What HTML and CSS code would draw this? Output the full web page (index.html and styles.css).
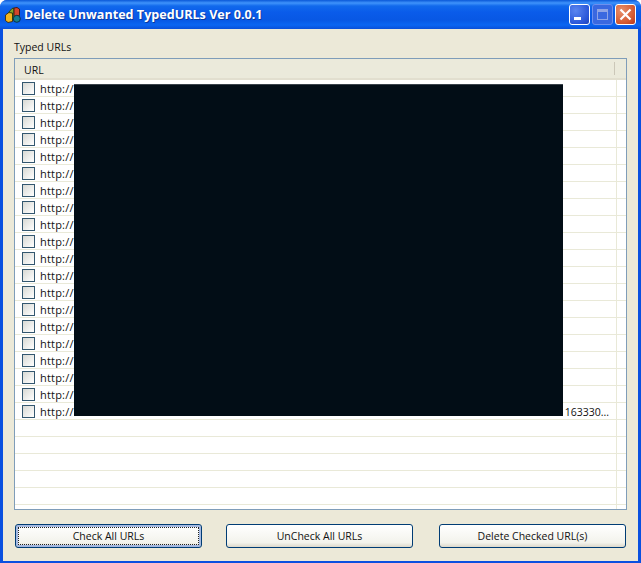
FILE: index.html
```
<!DOCTYPE html>
<html lang="en">
<head>
<meta charset="utf-8">
<title>Delete Unwanted TypedURLs Ver 0.0.1</title>
<link rel="stylesheet" href="styles.css">
</head>
<body>
<div class="window">
  <header class="titlebar">
    <svg class="app-icon" width="16" height="16" viewBox="0 0 16 16" aria-hidden="true">
      <path d="M0.500 8 4.500 5 7.500 6 7.500 14.500 3 15.500 0.500 13.500Z" fill="#f2b41e" stroke="#3a2a10" stroke-width=".9"/>
      <path d="M3.500 5.500 7 1.500 9 1 9 12 7.500 12.500 7.500 6Z" fill="#7fa52c" stroke="#243c10" stroke-width=".9"/>
      <path d="M9 1 12 0.500 14.500 2 14.500 8.500 9 9.500Z" fill="#d4462a" stroke="#3c1410" stroke-width=".9"/>
      <circle cx="11.800" cy="11.800" r="3.500" fill="#157f8f" stroke="#0a2c3c" stroke-width=".9"/>
    </svg>
    <span class="title">Delete Unwanted TypedURLs Ver 0.0.1</span>
    <div class="controls">
      <span class="ctl ctl-min"><svg width="19" height="19" viewBox="0 0 19 19" aria-hidden="true"><rect x="4" y="12" width="7" height="3" fill="#fff"/></svg></span>
      <span class="ctl ctl-max"><svg width="19" height="19" viewBox="0 0 19 19" aria-hidden="true"><path d="M4 4h11v11H4Z M5 7v7h9V7Z" fill="#8fa4e6" fill-rule="evenodd"/></svg></span>
      <span class="ctl ctl-close"><svg width="19" height="19" viewBox="0 0 19 19" aria-hidden="true"><path d="M4.500 4.500 14.500 14.500M14.500 4.500 4.500 14.500" stroke="#fff" stroke-width="2.200" fill="none"/></svg></span>
    </div>
  </header>
  <main class="client">
    <div class="group-label">Typed URLs</div>
    <section class="list">
      <div class="list-head"><span class="head-cell">URL</span><span class="head-rest"></span></div>
      <div class="list-body">
        <div class="row"><div class="cell"><i class="check"></i><span class="url">http://</span></div></div>
        <div class="row"><div class="cell"><i class="check"></i><span class="url">http://</span></div></div>
        <div class="row"><div class="cell"><i class="check"></i><span class="url">http://</span></div></div>
        <div class="row"><div class="cell"><i class="check"></i><span class="url">http://</span></div></div>
        <div class="row"><div class="cell"><i class="check"></i><span class="url">http://</span></div></div>
        <div class="row"><div class="cell"><i class="check"></i><span class="url">http://</span></div></div>
        <div class="row"><div class="cell"><i class="check"></i><span class="url">http://</span></div></div>
        <div class="row"><div class="cell"><i class="check"></i><span class="url">http://</span></div></div>
        <div class="row"><div class="cell"><i class="check"></i><span class="url">http://</span></div></div>
        <div class="row"><div class="cell"><i class="check"></i><span class="url">http://</span></div></div>
        <div class="row"><div class="cell"><i class="check"></i><span class="url">http://</span></div></div>
        <div class="row"><div class="cell"><i class="check"></i><span class="url">http://</span></div></div>
        <div class="row"><div class="cell"><i class="check"></i><span class="url">http://</span></div></div>
        <div class="row"><div class="cell"><i class="check"></i><span class="url">http://</span></div></div>
        <div class="row"><div class="cell"><i class="check"></i><span class="url">http://</span></div></div>
        <div class="row"><div class="cell"><i class="check"></i><span class="url">http://</span></div></div>
        <div class="row"><div class="cell"><i class="check"></i><span class="url">http://</span></div></div>
        <div class="row"><div class="cell"><i class="check"></i><span class="url">http://</span></div></div>
        <div class="row"><div class="cell"><i class="check"></i><span class="url">http://</span></div></div>
        <div class="row"><div class="cell"><i class="check"></i><span class="url">http://</span><span class="url-tail">163330...</span></div></div>
        <div class="row"><div class="cell"></div></div>
        <div class="row"><div class="cell"></div></div>
        <div class="row"><div class="cell"></div></div>
        <div class="row"><div class="cell"></div></div>
        <div class="row"><div class="cell"></div></div>
        <div class="row"><div class="cell"></div></div>
      </div>
    </section>
    <footer class="actions">
      <button class="btn btn-default" type="button">Check All URLs</button>
      <button class="btn" type="button">UnCheck All URLs</button>
      <button class="btn btn-last" type="button">Delete Checked URL(s)</button>
    </footer>
  </main>
  <div class="redaction"></div>
</div>
</body>
</html>
```
FILE: styles.css
```
* { box-sizing: border-box; }
html, body { margin: 0; padding: 0; }
body { width: 641px; height: 563px; overflow: hidden; font-family: "Open Sans", "DejaVu Sans", sans-serif; font-size: 10.5px; color: #111; }

.window {
  position: relative;
  width: 641px;
  height: 563px;
  display: flex;
  flex-direction: column;
  background: #0a50e0;
  border-radius: 7px 7px 0 0;
}

.titlebar {
  height: 29px;
  flex: none;
  display: flex;
  align-items: center;
  padding: 0 5px;
  border-radius: 7px 7px 0 0;
  background: linear-gradient(180deg, #0a58d8 0, #3f93fb 3px, #1169ec 6px, #0a5cea 12px, #0858e4 20px, #0b66f2 25px, #0a50d8 29px);
}
.app-icon { flex: none; margin-top: 1px; }
.title {
  margin-left: 3px;
  font-family: "Open Sans", sans-serif;
  font-weight: 700;
  font-size: 12.6px;
  color: #fff;
  text-shadow: 1px 1px 0 #0a3a9c;
  white-space: nowrap;
}
.controls { margin-left: auto; display: flex; gap: 2px; }
.ctl {
  width: 21px;
  height: 21px;
  display: flex;
  align-items: center;
  justify-content: center;
  border: 1px solid #fff;
  border-radius: 3px;
  background: radial-gradient(circle at 30% 30%, #5b86f0, #2a56d8 70%, #1f43b8);
}
.ctl-max { border-color: #6d90ee; background: #3a68e0; }
.ctl-close { background: radial-gradient(circle at 30% 30%, #e8906c, #d45a32 65%, #b8361a); }

.client {
  flex: 1;
  margin: 0 3px 3px 3px;
  padding: 11px 11px 13px 11px;
  background: #ece9d8;
  display: flex;
  flex-direction: column;
}
.group-label { height: 18px; padding-top: 1px; line-height: 13px; flex: none; }

.list {
  height: 452px;
  flex: none;
  border: 1px solid #7f9db9;
  background: #fff;
  overflow: hidden;
}
.list-head { height: 21px; display: flex; background: #ebeadb; border-bottom: 2px solid #e2dfcf; }
.head-cell { width: 600px; padding: 1px 0 0 9px; border-right: 1px solid #cbc7b8; margin: 3px 0; line-height: 14px; }
.head-rest { flex: 1; }

.row { height: 17px; border-bottom: 1px solid #e9e9d8; }
.cell { width: 602px; display: flex; align-items: center; padding-left: 7px; border-right: 1px solid #e9e9d8; }
.row .cell { height: 17px; margin-bottom: -1px; }
.check {
  width: 13px;
  height: 13px;
  flex: none;
  border: 1px solid #33576f;
  background: linear-gradient(135deg, #d8d9d4, #ffffff);
}
.url { margin-left: 5px; font-size: 11px; letter-spacing: 0.2px; white-space: nowrap; }
.url-tail { margin-left: auto; margin-right: 7px; white-space: nowrap; }

.actions { margin-top: 14px; display: flex; gap: 24px; padding-left: 1px; }
.btn {
  height: 24px;
  width: 187px;
  padding: 0;
  font: inherit;
  color: #111;
  border: 1px solid #003c74;
  border-radius: 3px;
  background: linear-gradient(180deg, #ffffff, #f3f3ec 80%, #dcd8ca);
}
.btn-last { margin-left: 2px; }
.btn-default {
  box-shadow: inset 0 0 0 2px #a5b9e0;
  outline: 1px dotted #222;
  outline-offset: -4px;
}

.redaction {
  position: absolute;
  left: 74px;
  top: 84px;
  width: 489px;
  height: 332px;
  background: #020d16;
  border-top: 1px solid #39424a;
}
```
